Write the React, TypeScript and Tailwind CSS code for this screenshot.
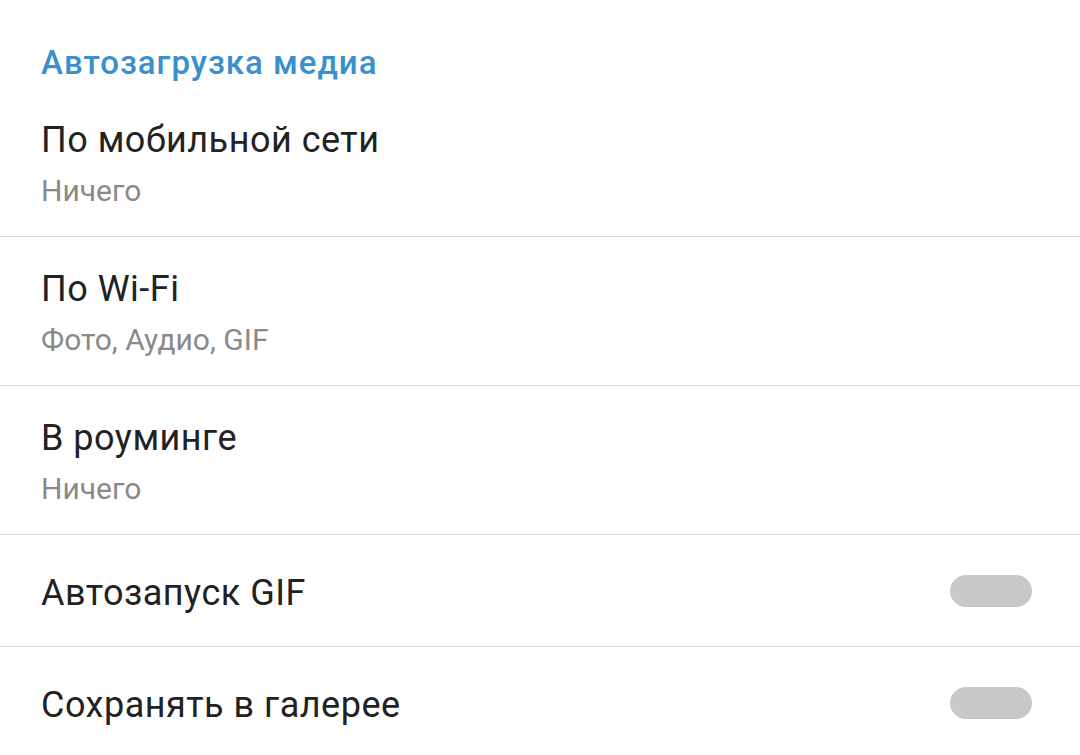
import React from 'react'

interface ChoiceRowProps {
  title: string
  value: string
}

function ChoiceRow({ title, value }: ChoiceRowProps) {
  return (
    <div className="flex flex-col px-[41px] pt-[31px] pb-[28px] border-b border-[#dadada]">
      <span className="text-[36px] leading-[42px] tracking-[0.5px] text-[#222222]">{title}</span>
      <span className="mt-[13px] text-[30px] leading-[34px] text-[#8a8a8a]">{value}</span>
    </div>
  )
}

function ToggleRow({ title }: { title: string }) {
  return (
    <div className="flex items-start justify-between pl-[41px] pr-[48px] pt-[37px] pb-[32px] border-b border-[#dadada]">
      <span className="text-[36px] leading-[42px] tracking-[0.5px] text-[#222222]">{title}</span>
      <span className="self-center mt-[-4px] w-[82px] h-[32px] rounded-full bg-[#c8c8c8]" />
    </div>
  )
}

export default function App() {
  return (
    <div
      className="w-[1080px] h-[755px] overflow-hidden bg-white"
      style={{ fontFamily: 'Roboto, "Noto Sans", sans-serif' }}
    >
      <div className="px-[41px] pt-[44px] pb-[6px]">
        <h2 className="text-[33px] leading-[38px] font-medium tracking-[1px] text-[#3a8fcd]">
          Автозагрузка медиа
        </h2>
      </div>
      <ChoiceRow title="По мобильной сети" value="Ничего" />
      <ChoiceRow title="По Wi-Fi" value="Фото, Аудио, GIF" />
      <ChoiceRow title="В роуминге" value="Ничего" />
      <ToggleRow title="Автозапуск GIF" />
      <ToggleRow title="Сохранять в галерее" />
    </div>
  )
}
